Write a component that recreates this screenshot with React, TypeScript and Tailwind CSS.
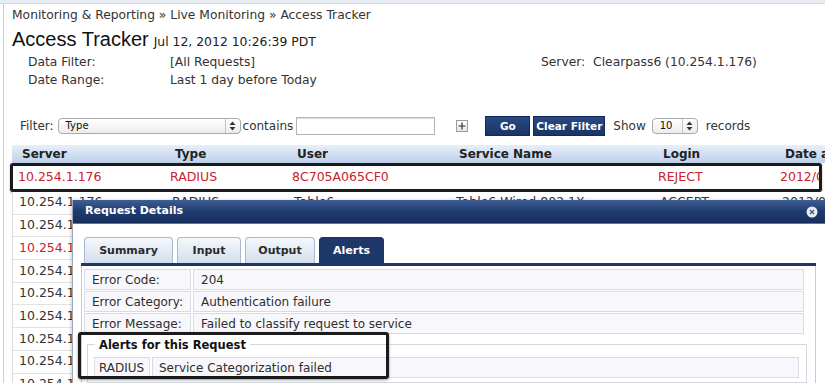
import React from 'react';

const RED = 'text-[#c8232c]';

const cols = [153, 122, 162, 204, 122, 160];

type Row = { cells: string[]; reject?: boolean };

const rows: Row[] = [
  { cells: ['10.254.1.176', 'RADIUS', 'Table6', 'Table6 Wired 802.1X', 'ACCEPT', '2012/07/12 10:25:11'] },
  { cells: ['10.254.1.176', 'RADIUS', 'Table6', 'Table6 Wired 802.1X', 'ACCEPT', '2012/07/12 10:24:50'] },
  { cells: ['10.254.1.176', 'RADIUS', '8C705A065CF0', '', 'REJECT', '2012/07/12 10:23:02'], reject: true },
  { cells: ['10.254.1.176', 'RADIUS', 'Table6', 'Table6 Wired 802.1X', 'ACCEPT', '2012/07/12 10:21:40'] },
  { cells: ['10.254.1.176', 'RADIUS', 'Table6', 'Table6 Wired 802.1X', 'ACCEPT', '2012/07/12 10:20:16'] },
  { cells: ['10.254.1.176', 'RADIUS', 'Table6', 'Table6 Wired 802.1X', 'ACCEPT', '2012/07/12 10:18:33'] },
  { cells: ['10.254.1.176', 'RADIUS', 'Table6', 'Table6 Wired 802.1X', 'ACCEPT', '2012/07/12 10:16:09'] },
  { cells: ['10.254.1.176', 'RADIUS', 'Table6', 'Table6 Wired 802.1X', 'ACCEPT', '2012/07/12 10:14:47'] },
  { cells: ['10.254.1.176', 'RADIUS', 'Table6', 'Table6 Wired 802.1X', 'ACCEPT', '2012/07/12 10:12:20'] },
];

const Stepper = () => (
  <svg width="7" height="10" viewBox="0 0 7 10" className="shrink-0">
    <path d="M3.5 0.5 L6.5 4 L0.5 4 Z" fill="#333" />
    <path d="M3.5 9.5 L6.5 6 L0.5 6 Z" fill="#333" />
  </svg>
);

const Select = ({ label, width }: { label: string; width: string }) => (
  <div className={`${width} h-[16px] flex items-center justify-between rounded-[4px] border border-[#a9a9a9] bg-gradient-to-b from-white to-[#ececec] pl-[7px] pr-[4px] shadow-[inset_0_1px_0_#fff]`}>
    <span className="text-[10px] leading-none text-[#111]">{label}</span>
    <span className="flex items-center h-full border-l border-[#c4c4c4] pl-[3px]">
      <Stepper />
    </span>
  </div>
);

const NavyButton = ({ label, width }: { label: string; width: string }) => (
  <div className={`${width} h-[20px] flex items-center justify-center bg-gradient-to-b from-[#2a4a82] to-[#1a3466] border border-[#14295a] text-white font-bold text-[10.5px] leading-none`}>
    {label}
  </div>
);

const Tab = ({ label, width, active }: { label: string; width: string; active?: boolean }) => (
  <div
    className={`${width} h-[26px] flex items-center justify-center pt-[2px] rounded-t-[4px] border border-b-0 text-[11px] font-bold ${
      active
        ? 'bg-[#1c3768] border-[#1c3768] text-white'
        : 'bg-gradient-to-b from-[#f6f8fc] to-[#d3deec] border-[#a7b8d0] text-[#2b2b2b]'
    }`}
  >
    {label}
  </div>
);

const DetailRow = ({ label, value }: { label: string; value: string }) => (
  <div className="flex gap-[2px] h-[21px]">
    <div className="w-[107px] border border-[#d6dbe4] bg-[#f8f8fc] pl-[7px] flex items-center text-[12px] text-[#2e2e2e]">
      {label}
    </div>
    <div className="w-[611px] border border-[#d6dbe4] bg-[#f8f8fc] pl-[7px] flex items-center text-[12px] text-[#2e2e2e]">
      {value}
    </div>
  </div>
);

export default function App() {
  return (
    <div className="relative w-[825px] h-[383px] overflow-hidden bg-white font-['DejaVu_Sans',sans-serif] text-[#333]">
      <div className="h-[4px] bg-[#e8edf3] border-b border-[#d2dbe5]" />
      <div className="ml-[3px] border-l border-[#c3d0e0] h-[379px]">
        {/* Breadcrumb */}
        <div className="h-[22px] flex items-center pl-[8px] text-[12.3px] text-[#333]">
          Monitoring &amp; Reporting » Live Monitoring » Access Tracker
        </div>

        {/* Title */}
        <div className="h-[26px] flex items-end pb-[3px] pl-[8px]">
          <div className="flex items-baseline gap-[5px]">
            <span className="font-['Liberation_Sans',sans-serif] text-[20px] leading-none text-[#111]">Access Tracker</span>
            <span className="text-[12.4px] leading-none text-[#222]">Jul 12, 2012 10:26:39 PDT</span>
          </div>
        </div>

        {/* Filter info */}
        <div className="mt-[1px] pl-[24px] text-[12.3px] text-[#333]">
          <div className="grid grid-cols-[142px_371px_auto] h-[18px] items-center">
            <span>Data Filter:</span>
            <span>[All Requests]</span>
            <span>Server:&nbsp; Clearpass6 (10.254.1.176)</span>
          </div>
          <div className="grid grid-cols-[142px_371px_auto] h-[18px] items-center">
            <span>Date Range:</span>
            <span>Last 1 day before Today</span>
            <span />
          </div>
        </div>

        {/* Filter bar */}
        <div className="mt-[28px] h-[18px] flex items-center pl-[16px] text-[12px] text-[#333]">
          <span>Filter:</span>
          <div className="ml-[4px]">
            <Select label="Type" width="w-[183px]" />
          </div>
          <span className="ml-[2px]">contains</span>
          <div className="ml-[3px] w-[139px] h-[18px] border border-[#b5b5b5] bg-white shadow-[inset_0_1px_1px_#ddd]" />
          <div className="ml-[21px] w-[12px] h-[12px] border border-[#9a9a9a] bg-gradient-to-b from-white to-[#e6e6e6] flex items-center justify-center">
            <svg width="8" height="8" viewBox="0 0 8 8">
              <path d="M4 0.5 V7.5 M0.5 4 H7.5" stroke="#333" strokeWidth="1.2" />
            </svg>
          </div>
          <div className="ml-[17px]">
            <NavyButton label="Go" width="w-[45px]" />
          </div>
          <div className="ml-[3px]">
            <NavyButton label="Clear Filter" width="w-[72px]" />
          </div>
          <span className="ml-[8px]">Show</span>
          <div className="ml-[6px]">
            <Select label="10" width="w-[46px]" />
          </div>
          <span className="ml-[8px]">records</span>
        </div>

        {/* Table */}
        <div className="mt-[10px] ml-[8px] w-[900px]">
          <div className="h-[18px] flex items-center bg-gradient-to-b from-[#e8eff9] to-[#bdd0ea] text-[12px] font-bold text-[#222]">
            {['Server', 'Type', 'User', 'Service Name', 'Login', 'Date and Time'].map((h, i) => (
              <div key={h} style={{ width: cols[i] }} className="pl-[10px] shrink-0 whitespace-nowrap">
                {h}
              </div>
            ))}
          </div>

          {/* Highlighted row */}
          <div className="-ml-[2px] w-[812px] h-[29px] flex items-center border-[3px] border-[#1b1b1b] rounded-[3px] bg-white overflow-hidden shadow-[0_1px_2px_rgba(0,0,0,0.35)]">
            {['10.254.1.176', 'RADIUS', '8C705A065CF0', '', 'REJECT', '2012/07/12 10:26:01'].map((c, i) => (
              <div key={i} style={{ width: i === 0 ? cols[0] - 1 : cols[i] }} className={`pl-[5px] shrink-0 whitespace-nowrap text-[12.5px] ${RED}`}>
                {c}
              </div>
            ))}
          </div>

          <div className="border-l border-[#dcdcdc]">
            {rows.map((r, ri) => (
              <div key={ri} className="h-[22.7px] flex items-center border-b border-[#e3e3e3] bg-white">
                {r.cells.map((c, i) => (
                  <div
                    key={i}
                    style={{ width: cols[i] }}
                    className={`pl-[6px] shrink-0 whitespace-nowrap text-[12.5px] ${r.reject ? RED : 'text-[#333]'}`}
                  >
                    {c}
                  </div>
                ))}
              </div>
            ))}
          </div>
        </div>
      </div>

      {/* Request Details dialog */}
      <div className="absolute left-[72px] top-[200px] w-[753px] h-[200px] bg-white border-l border-[#9aa7b8] shadow-[-1px_0_3px_rgba(0,0,0,0.2)]">
        <div className="h-[24px] flex items-center justify-between pl-[12px] pr-[7px] bg-gradient-to-b from-[#3e5f95] via-[#1f3b6d] to-[#172f5e] border-b border-[#5c78a6]">
          <span className="text-white font-bold text-[11px]">Request Details</span>
          <svg width="12" height="12" viewBox="0 0 12 12">
            <circle cx="6" cy="6" r="5.5" fill="#e9edf3" />
            <path d="M4 4 L8 8 M8 4 L4 8" stroke="#4a5870" strokeWidth="1.4" />
          </svg>
        </div>

        <div className="relative pt-[13px] pl-[8px]">
          <div className="w-[735px]">
            <div className="flex items-end gap-[4px] pl-[3px]">
              <Tab label="Summary" width="w-[89px]" />
              <Tab label="Input" width="w-[64px]" />
              <Tab label="Output" width="w-[70px]" />
              <Tab label="Alerts" width="w-[65px]" active />
            </div>
            <div className="h-[3px] bg-[#1c3768]" />
            <div className="border-x border-[#c2ccda] h-[140px] pt-[3px] pl-[2px]">
              <div className="flex flex-col gap-[1px]">
                <DetailRow label="Error Code:" value="204" />
                <DetailRow label="Error Category:" value="Authentication failure" />
                <DetailRow label="Error Message:" value="Failed to classify request to service" />
              </div>

              <fieldset className="mt-[3px] ml-[3px] w-[720px] border border-[#d2d8e1] pl-[6px] pb-[4px]">
                <legend className="px-[4px] ml-[1px] leading-[14px]">
                  <span className="text-[11.5px] font-bold text-[#111]">Alerts for this Request</span>
                </legend>
                <div className="flex gap-[2px] h-[21px] mt-[5px]">
                  <div className="w-[56px] border border-[#d6dbe4] bg-[#f8f8fc] pl-[4px] flex items-center text-[12px] text-[#2e2e2e]">
                    RADIUS
                  </div>
                  <div className="w-[647px] border border-[#d6dbe4] bg-[#f8f8fc] pl-[6px] flex items-center text-[12px] text-[#2e2e2e]">
                    Service Categorization failed
                  </div>
                </div>
              </fieldset>
            </div>
          </div>

          {/* annotation box */}
          <div className="absolute left-[5px] top-[108px] w-[311px] h-[47px] border-[3px] border-[#1b1b1b] rounded-[3px] shadow-[0_1px_3px_rgba(0,0,0,0.4)]" />
        </div>
      </div>
    </div>
  );
}
